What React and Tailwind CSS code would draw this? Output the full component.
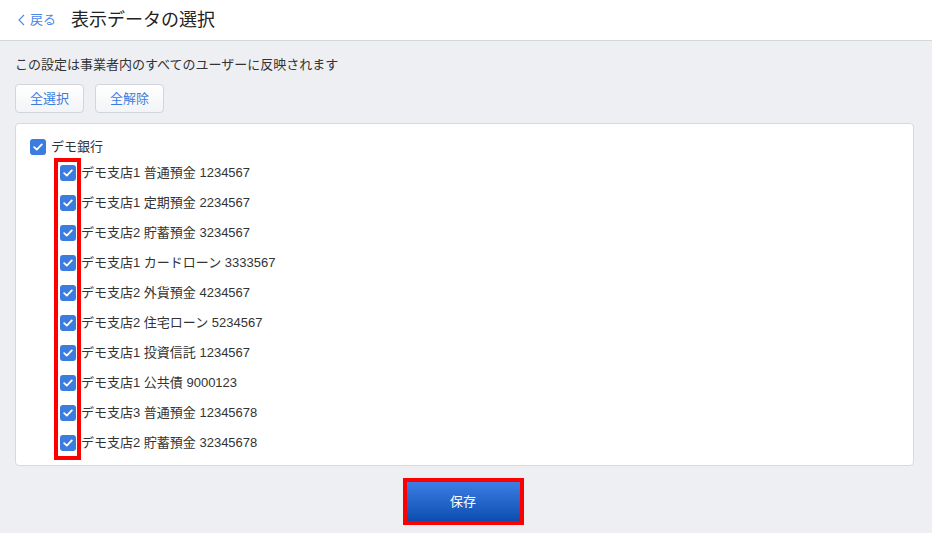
import React, { useState } from 'react';

const accounts = [
  'デモ支店1 普通預金 1234567',
  'デモ支店1 定期預金 2234567',
  'デモ支店2 貯蓄預金 3234567',
  'デモ支店1 カードローン 3333567',
  'デモ支店2 外貨預金 4234567',
  'デモ支店2 住宅ローン 5234567',
  'デモ支店1 投資信託 1234567',
  'デモ支店1 公共債 9000123',
  'デモ支店3 普通預金 12345678',
  'デモ支店2 貯蓄預金 32345678',
];

const Check = ({ checked, onClick }) => (
  <button
    onClick={onClick}
    className={`w-4 h-4 rounded-[3px] flex items-center justify-center shrink-0 ${checked ? 'bg-[#3a7ce0]' : 'bg-white border border-[#b9bec7]'}`}
  >
    {checked && (
      <svg width="10" height="8" viewBox="0 0 10 8" fill="none">
        <path d="M1.2 4.2 L3.8 6.6 L8.8 1.4" stroke="white" strokeWidth="1.8" strokeLinecap="round" strokeLinejoin="round" />
      </svg>
    )}
  </button>
);

const App = () => {
  const [checked, setChecked] = useState(accounts.map(() => true));
  const all = checked.every(Boolean);

  const toggle = (i) => setChecked(checked.map((c, j) => (j === i ? !c : c)));

  return (
    <div
      className="min-h-screen w-[932px] h-[533px] bg-[#eeeff3] text-[#333] text-[13px] overflow-hidden"
      style={{ fontFamily: '"Liberation Sans", "Noto Sans CJK JP", sans-serif' }}
    >
      <header className="h-[41px] bg-white border-b border-[#d4d6db] flex items-center">
        <button className="flex items-center gap-[5px] ml-[18px] text-[#4d86e6] text-[13px]">
          <svg width="7" height="12" viewBox="0 0 7 12" fill="none">
            <path d="M6 1 L1 6 L6 11" stroke="#4d86e6" strokeWidth="1.1" />
          </svg>
          戻る
        </button>
        <h1 className="ml-[15px] text-[18px] text-[#222]">表示データの選択</h1>
      </header>

      <main className="px-[15px] pt-[15px]">
        <p className="leading-[18px]">この設定は事業者内のすべてのユーザーに反映されます</p>

        <div className="flex gap-[11px] mt-[10px]">
          <button
            onClick={() => setChecked(accounts.map(() => true))}
            className="w-[69px] h-[29px] rounded-[4px] border border-[#d2d5db] bg-gradient-to-b from-white to-[#f3f4f7] text-[#3a7ce0]"
          >
            全選択
          </button>
          <button
            onClick={() => setChecked(accounts.map(() => false))}
            className="w-[69px] h-[29px] rounded-[4px] border border-[#d2d5db] bg-gradient-to-b from-white to-[#f3f4f7] text-[#3a7ce0]"
          >
            全解除
          </button>
        </div>

        <section className="mt-[10px] w-[899px] h-[343px] bg-white border border-[#d7d9de] rounded-[4px] pl-[14px] pt-[15px]">
          <div className="flex items-center gap-[5px] h-[16px]">
            <Check checked={all} onClick={() => setChecked(accounts.map(() => !all))} />
            <span>デモ銀行</span>
          </div>

          <div className="relative mt-[3px] ml-[24px]">
            <div className="absolute left-0 top-0 w-[27px] h-[302px] border-[4px] border-[#ff0000] pointer-events-none" />
            {accounts.map((a, i) => (
              <div key={a} className="flex items-center h-[30px] first:mt-[1px]">
                <div className="w-[27px] flex justify-center pl-[1px]">
                  <Check checked={checked[i]} onClick={() => toggle(i)} />
                </div>
                <span className="whitespace-nowrap">{a}</span>
              </div>
            ))}
          </div>
        </section>

        <div className="flex justify-center mt-[12px]">
          <button className="w-[121px] h-[47px] mr-[6px] border-[4px] border-[#ff0000] bg-gradient-to-b from-[#3c7ee6] to-[#0a4eb0] text-white text-[13px]">
            保存
          </button>
        </div>
      </main>
    </div>
  );
};

export default App;
